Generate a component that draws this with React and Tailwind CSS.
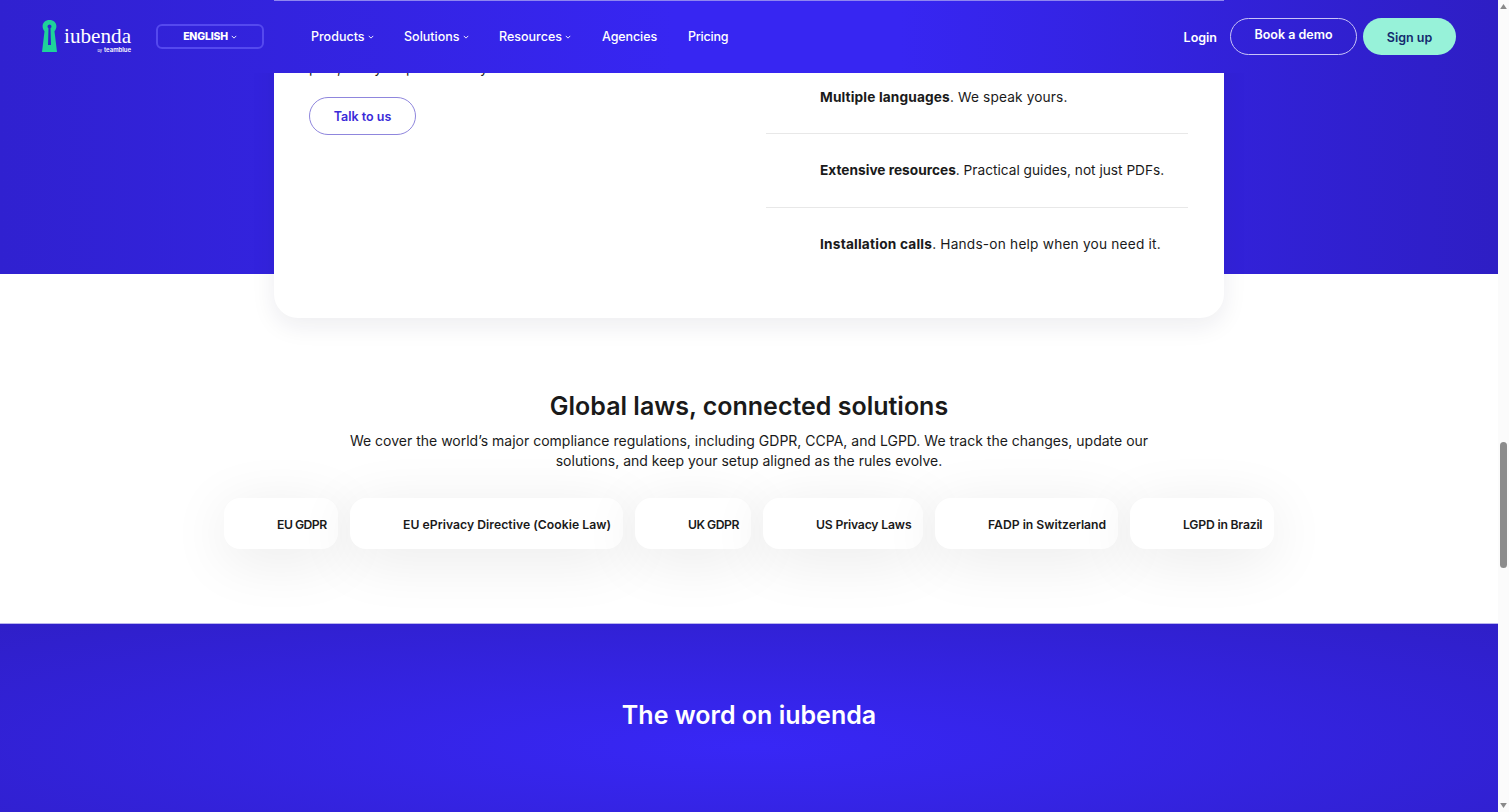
import React from "react";

const font = "font-['Inter','Liberation_Sans',sans-serif]";

function Chevron({ className = "" }) {
  return (
    <svg viewBox="0 0 8 5" className={`w-[6px] h-[4px] ${className}`} fill="none" stroke="currentColor" strokeWidth="1.2">
      <path d="M1 1l3 3 3-3" />
    </svg>
  );
}

function Logo() {
  return (
    <div className="flex items-start w-[90px] h-[34px]">
      <svg viewBox="0 0 15 32" className="w-[15px] h-[32px] shrink-0">
        <path
          fill="#1fd29a"
          fillRule="evenodd"
          d="M7.500 0C3.400 0 .6 2.700.6 6.300c0 2.100.8 3.700 1.900 4.900L0 32h15l-2.500-20.800c1.100-1.200 1.900-2.800 1.900-4.900C14.400 2.700 11.600 0 7.500 0zM7.500 4.400a2.100 2.100 0 0 1 1 3.900L9 25H6l.5-16.700a2.100 2.100 0 0 1 1-3.900z"
        />
      </svg>
      <div className="ml-[7px] flex flex-col items-end">
        <span className="font-['Liberation_Serif',serif] text-[21.200px] leading-[22px] text-white mt-[5px]">iubenda</span>
        <span className="text-[6px] leading-[7px] font-semibold text-white mt-[-1px]">
          <span className="font-normal text-[4px] mr-[2px]">by</span>teamblue
        </span>
      </div>
    </div>
  );
}

function NavItem({ children, caret, className = "" }) {
  return (
    <a className={`flex items-center gap-[3px] pt-px text-[12.500px] font-medium text-white ${className}`}>
      {children}
      {caret && <Chevron />}
    </a>
  );
}

function Header() {
  return (
    <header className="absolute top-0 left-0 right-0 h-[73px] z-10 flex items-center px-[42px] bg-[linear-gradient(90deg,#3021d0,#3726f2_45%,#3726f2_60%,#2e1ec4)]">
      <div className="absolute top-0 left-[274px] w-[950px] h-px bg-[#8f86f0]" />
      <Logo />
      <button className="ml-[24px] w-[108px] h-[25px] rounded-[6px] border-2 border-[#5549ee] flex items-center justify-center gap-[3px] text-[10.500px] font-extrabold text-white tracking-[-0.2px]">
        ENGLISH <Chevron />
      </button>
      <nav className="flex items-center ml-[47px]">
        <NavItem caret className="w-[93px]">Products</NavItem>
        <NavItem caret className="w-[95px]">Solutions</NavItem>
        <NavItem caret className="w-[103px]">Resources</NavItem>
        <NavItem className="w-[86px] tracking-[-0.1px]">Agencies</NavItem>
        <NavItem className="tracking-[-0.2px]">Pricing</NavItem>
      </nav>
      <div className="ml-auto flex items-center">
        <a className="text-[12.500px] font-semibold text-white pt-[3px]">Login</a>
        <a className="ml-[13px] w-[127px] h-[37px] rounded-full border border-[#c9c4f7] flex items-center justify-center text-[12.500px] font-semibold text-white pb-[2px]">Book a demo</a>
        <a className="ml-[6px] w-[93px] h-[37px] rounded-full bg-[#97f2d9] flex items-center justify-center text-[12.500px] font-semibold text-[#142a6e] pt-[3px]">Sign up</a>
      </div>
    </header>
  );
}

const features = [
  ["Multiple languages", ". We speak yours.", "tracking-[0.14px] border-b border-[#e8e8e8] pt-[2px]"],
  ["Extensive resources", ". Practical guides, not just PDFs.", "border-b border-[#e8e8e8]"],
  ["Installation calls", ". Hands-on help when you need it.", "tracking-[0.2px] pb-[2px]"],
];

function Hero() {
  return (
    <section className="relative z-[1] h-[274px] flex justify-center bg-[linear-gradient(90deg,#3021d0,#3726f2_45%,#3726f2_60%,#2e1ec4)]">
      <div className="w-[950px] h-[318px] shrink-0 bg-white rounded-b-[24px] shadow-[0_8px_24px_rgba(20,20,60,0.08)] flex pl-[35px] pr-[36px]">
        <div className="w-[457px] shrink-0 pt-[58px]">
          <p className="text-[14px] leading-[20px] text-[#1a1a1a] whitespace-nowrap">plan, every step of the way.</p>
          <a className="mt-[19px] pt-[2px] flex items-center justify-center w-[107px] h-[38px] rounded-full border border-[#8f86dd] text-[12.500px] font-semibold text-[#3a2bd8]">Talk to us</a>
        </div>
        <ul className="w-[422px] pt-[60px]">
          {features.map(([b, t, c]) => (
            <li key={b} className={`h-[74px] flex items-center pl-[54px] text-[13.700px] text-[#1a1a1a] whitespace-nowrap ${c}`}>
              <b className="font-bold">{b}</b>{t}
            </li>
          ))}
        </ul>
      </div>
    </section>
  );
}

const laws = [
  ["EU GDPR", "w-[114px] tracking-[-0.5px]"],
  ["EU ePrivacy Directive (Cookie Law)", "w-[273px] tracking-[0.04px]"],
  ["UK GDPR", "w-[116px] tracking-[-0.5px]"],
  ["US Privacy Laws", "w-[160px] tracking-[-0.17px]"],
  ["FADP in Switzerland", "w-[183px]"],
  ["LGPD in Brazil", "w-[144px] tracking-[-0.2px]"],
];

function Laws() {
  return (
    <section className="h-[349px] bg-white flex flex-col items-center pt-[114px]">
      <h2 className="text-[25px] leading-[36px] font-semibold text-[#1a1a1a]">Global laws, connected solutions</h2>
      <p className="mt-[7px] w-[810px] text-center text-[14px] leading-[20px] text-[#1a1a1a]">
        We cover the world’s major compliance regulations, including GDPR, CCPA, and LGPD. We track the changes, update our solutions, and keep your setup aligned as the rules evolve.
      </p>
      <div className="mt-[27px] flex gap-[12px] justify-center">
        {laws.map(([l, w]) => (
          <div key={l} className={`${w} h-[51px] rounded-[16px] bg-white shadow-[0_10px_60px_rgba(0,0,0,0.09)] flex items-center pl-[53px] pt-[3px] text-[12.200px] font-semibold text-[#1a1a1a] whitespace-nowrap`}>
            {l}
          </div>
        ))}
      </div>
    </section>
  );
}

function Word() {
  return (
    <section className="flex-1 border-t border-[#b9b4ee] flex justify-center pt-[72px] bg-[radial-gradient(ellipse_at_50%_65%,#3827f6_0%,#2f1fc8_100%)]">
      <h2 className="text-[25px] leading-[38px] font-semibold text-white">The word on iubenda</h2>
    </section>
  );
}

function Scrollbar() {
  return (
    <div className="w-[11px] shrink-0 bg-[#fbfbfb] flex flex-col items-center py-[4px]">
      <svg viewBox="0 0 8 6" className="w-[7px] h-[5px]"><path d="M4 0l4 6H0z" fill="#8a8a8a" /></svg>
      <div className="w-[7px] h-[126px] rounded-full bg-[#8c8c8c] mt-[433px]" />
      <svg viewBox="0 0 8 6" className="w-[7px] h-[5px] mt-auto"><path d="M4 6l4-6H0z" fill="#8a8a8a" /></svg>
    </div>
  );
}

export default function App() {
  return (
    <div className={`h-[812px] w-full flex overflow-hidden ${font}`}>
      <main className="relative flex-1 flex flex-col overflow-hidden">
        <Header />
        <Hero />
        <Laws />
        <Word />
      </main>
      <Scrollbar />
    </div>
  );
}
